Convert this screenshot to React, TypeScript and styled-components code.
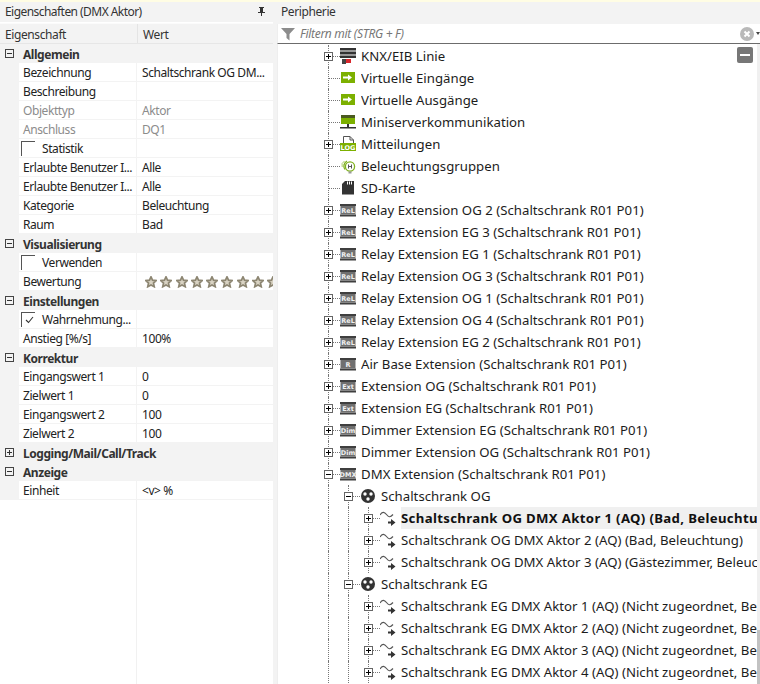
import React from "react";
import styled, { createGlobalStyle } from "styled-components";

const Global = createGlobalStyle`
  html, body { margin: 0; padding: 0; background: #f3f3f3; }
  body { width: 760px; height: 684px; overflow: hidden; font-family: "Noto Sans", "Open Sans", sans-serif; color: #1c1c1c; }
  #root { height: 684px; }
`;

const Page = styled.div`
  width: 760px; height: 684px; display: flex; flex-direction: column; overflow: hidden;
`;
const TopStrip = styled.div`height: 2px; background: #fffde4; flex: none;`;
const Panels = styled.div`flex: 1; display: flex; min-height: 0;`;

const LeftPanel = styled.section`
  width: 273px; margin-right: 4px; flex: none; display: flex; flex-direction: column; background: #fff;
`;
const TitleBar = styled.div`
  height: 20px; flex: none; display: flex; align-items: center; justify-content: space-between; box-sizing: border-box;
  padding: 0 8px 2px 5px; background: #f3f3f3; font-size: 12px; letter-spacing: -0.55px; color: #333;
`;
const RightTitle = styled(TitleBar)`padding-left: 4px; letter-spacing: -0.4px;`;
const PinIcon = styled.svg`width: 7px; height: 9px; display: block;`;
const HeaderRow = styled.div`
  height: 21px; flex: none; display: grid; grid-template-columns: 137px 1fr; background: #f3f3f3;
  border-top: 1px solid #fbfbfb; border-bottom: 1px solid #e6e6e6; box-sizing: border-box; margin-top: 1px;
`;
const HeaderCell = styled.div`
  display: flex; align-items: center; padding: 1px 0 0 5px; font-size: 12px; letter-spacing: -0.4px; color: #333;
  & + & { border-left: 1px solid #e4e4e4; }
`;
const Grid = styled.div`flex: 1; position: relative; display: flex; flex-direction: column;`;
const Category = styled.div`
  height: 19px; flex: none; background: #f3f3f3; display: flex; align-items: center; font-size: 12px; letter-spacing: -0.45px;
  font-weight: 700; color: #333;
`;
const CategoryName = styled.span`padding-top: 1px;`;
const CatBox = styled.span<{ $plus?: boolean }>`
  width: 7px; height: 7px; margin: 0 9px 0 5px; flex: none; border: 1px solid #444; position: relative; box-sizing: content-box;
  &::before { content: ""; position: absolute; left: 1px; right: 1px; top: 3px; height: 1px; background: #333; }
  &::after { content: ""; position: absolute; display: ${(p) => (p.$plus ? "block" : "none")};
    top: 1px; bottom: 1px; left: 3px; width: 1px; background: #333; }
`;
const PropRow = styled.div`
  height: 19px; flex: none; display: grid; grid-template-columns: 19px 117px 1fr; background: #fff; box-sizing: border-box;
  border-bottom: 1px solid #f3f3f3; font-size: 12px; letter-spacing: -0.42px;
`;
const Gutter = styled.div`background: #f3f3f3; margin-bottom: -1px;`;
const NameCell = styled.div<{ $muted?: boolean }>`
  display: flex; align-items: center; padding: 1px 0 0 4px; min-width: 0; white-space: nowrap; overflow: hidden;
  color: ${(p) => (p.$muted ? "#8c8c8c" : "#222")};
`;
const ValueCell = styled.div<{ $muted?: boolean }>`
  display: flex; align-items: center; padding: 1px 0 0 5px; border-left: 1px solid #f3f3f3; min-width: 0; white-space: nowrap; overflow: hidden;
  color: ${(p) => (p.$muted ? "#8c8c8c" : "#222")};
`;
const CheckFrame = styled.span`
  width: 13px; height: 14px; flex: none; margin: -1px 7px 0 -2px; border-left: 1px solid #555; border-top: 1px solid #555; position: relative;
`;
const CheckMark = styled.svg`position: absolute; left: 3px; top: 3px; width: 9px; height: 8px;`;
const Stars = styled.div`display: flex; gap: 3.3px; padding-left: 3px;`;
const EmptyFill = styled.div`flex: 1; display: grid; grid-template-columns: 136px 1px 1fr;`;
const EmptyLine = styled.div`background: #f1f1f1;`;

const RightPanel = styled.section`flex: 1; min-width: 0; display: flex; flex-direction: column; position: relative;`;
const FilterBar = styled.div`
  height: 19px; margin-top: 2px; flex: none; background: #fff; border-bottom: 1px solid #6c6c6c; display: flex; align-items: center; position: relative;
  padding-left: 3px; font-size: 12px; letter-spacing: -0.3px; font-style: italic; color: #777; gap: 5px; border-left: 1px solid #eee;
`;
const ClearBtn = styled.span`
  position: absolute; right: 6px; top: 3px; width: 14px; height: 14px; border-radius: 50%; background: #b9b9b9;
  display: flex; align-items: center; justify-content: center;
`;
const Caret = styled.span`
  position: absolute; right: 0; top: 8px; width: 0; height: 0; border-left: 2px solid transparent; border-right: 2px solid transparent; border-top: 3px solid #444;
`;
const TreeWrap = styled.div`flex: 1; min-height: 0; background: #fff; display: flex; position: relative; border-left: 1px solid #eee;`;
const Tree = styled.div`flex: 1; min-width: 0; overflow: hidden; padding: 1px 0 0 40px;`;
const ScrollTrack = styled.div`width: 3px; flex: none; background: #f0f0f0; display: flex; flex-direction: column; justify-content: flex-end;`;
const ScrollThumb = styled.div`height: 54px; background: #c2c2c2;`;
const CollapseBtn = styled.span`
  position: absolute; right: 7px; top: 3px; width: 16px; height: 16px; border-radius: 2px; background: #777;
  display: flex; align-items: center; justify-content: center;
  &::before { content: ""; width: 10px; height: 2px; background: #fff; }
`;
const Row = styled.div`height: 22px; display: flex; align-items: stretch; white-space: nowrap;`;
const Guide = styled.span<{ $on?: boolean }>`
  width: 20px; flex: none; position: relative;
  &::before { content: ""; display: ${(p) => (p.$on ? "block" : "none")}; position: absolute; left: 10px; top: 0; bottom: 0; border-left: 1px dotted #777; }
`;
const Joint = styled.span`
  width: 20px; flex: none; position: relative;
  &::before { content: ""; position: absolute; left: 10px; top: 0; bottom: 0; border-left: 1px dotted #777; }
  &::after { content: ""; position: absolute; left: 10px; right: -2px; top: 11px; border-top: 1px dotted #777; }
`;
const ExpBox = styled.span`
  position: absolute; z-index: 1; left: 6px; top: 7px; width: 7px; height: 7px; border: 1px solid #666; background: #fff; box-sizing: content-box;
`;
const ExpBar = styled.span`position: absolute; left: 1px; right: 1px; top: 3px; height: 1px; background: #000;`;
const ExpStem = styled.span`position: absolute; top: 1px; bottom: 1px; left: 3px; width: 1px; background: #000;`;
const IconSlot = styled.span`
  width: 16px; height: 16px; margin: 3px 5px 0 2px; flex: none; display: block;
  & > svg { display: block; width: 16px; height: 16px; }
`;
const Label = styled.span<{ $selected?: boolean }>`
  flex: 1; min-width: 0; overflow: hidden; display: flex; align-items: center; font-size: 13.2px;
  font-weight: ${(p) => (p.$selected ? 700 : 400)}; letter-spacing: ${(p) => (p.$selected ? "0.34px" : "0.02px")};
  background: ${(p) => (p.$selected ? "#f0f0f0" : "transparent")};
  color: ${(p) => (p.$selected ? "#111" : "#1c1c1c")};
`;
const LabelText = styled.span`flex: none;`;

const Star = () => (
  <svg width="12" height="12" viewBox="0 0 14 14">
    <path d="M7 1l1.8 3.9 4.2.5-3.1 2.9.9 4.2L7 10.4 3.2 12.5l.9-4.2L1 5.4l4.2-.5z" fill="#d9d3c3" stroke="#8d8672" strokeWidth="2" />
  </svg>
);

type IconKind = "knx" | "in" | "com" | "log" | "bulb" | "sd" | "ext" | "dmx" | "act";

const ChipText = styled.text`font-family: "DejaVu Sans", sans-serif; font-weight: 700;`;

const Icon = ({ kind, tag }: { kind: IconKind; tag?: string }) => {
  switch (kind) {
    case "knx":
      return (
        <svg viewBox="0 0 16 16">
          <rect x="0" y="0" width="16" height="2.5" fill="#333" />
          <rect x="0" y="3.5" width="16" height="3" fill="#333" />
          <rect x="0" y="7.5" width="16" height="2.5" fill="#333" />
          <rect x="2" y="11" width="4" height="5" fill="#444" />
          <rect x="6" y="11" width="5" height="4" fill="#d8262c" />
        </svg>
      );
    case "in":
      return (
        <svg viewBox="0 0 16 16">
          <rect x="1" y="2" width="14" height="11" fill="#7cb000" />
          <path d="M3 6.5h5V4.5l4 3-4 3V8.5H3z" fill="#fff" />
        </svg>
      );
    case "com":
      return (
        <svg viewBox="0 0 16 16">
          <rect x="1" y="1" width="14" height="3" fill="#4b5a20" />
          <rect x="1" y="4" width="14" height="6" fill="#7cb000" />
          <rect x="7" y="10" width="2" height="3" fill="#333" />
          <rect x="0" y="13" width="16" height="1.5" fill="#333" />
        </svg>
      );
    case "log":
      return (
        <svg viewBox="0 0 16 16">
          <path d="M3.5 7V.5h6.5l3.5 3.5v4" fill="none" stroke="#555" />
          <path d="M10 .5v3.5h3.5" fill="none" stroke="#555" />
          <rect x="0" y="7" width="16" height="8" fill="#7cb000" />
          <ChipText x="8" y="13.5" fontSize="6.5" fill="#fff" textAnchor="middle">LOG</ChipText>
        </svg>
      );
    case "bulb":
      return (
        <svg viewBox="0 0 16 16">
          <circle cx="10" cy="8.5" r="4.6" fill="none" stroke="#7fb11f" strokeWidth="1.3" />
          <path d="M4.8 11.5A6 6 0 0 1 7 3" fill="none" stroke="#7fb11f" strokeWidth="1.3" />
          <path d="M2.2 9A5 5 0 0 1 4.5 3" fill="none" stroke="#a8cc66" strokeWidth="1" />
          <path d="M8.5 6.5v4M11.5 6.5v4M8.5 8.5h3" stroke="#555" strokeWidth="1" />
          <rect x="8.5" y="13.5" width="3" height="2" fill="#999" />
        </svg>
      );
    case "sd":
      return (
        <svg viewBox="0 0 16 16">
          <path d="M5 1h9v13.5H2V4z" fill="#333" />
          <path d="M7.5 1.5v3M9.5 1.5v3M11.5 1.5v3" stroke="#fff" strokeWidth="1" />
        </svg>
      );
    case "ext":
      return (
        <svg viewBox="0 0 16 16">
          <rect x="0" y="2" width="16" height="2" fill="#3f3f3f" />
          <rect x="0" y="12.5" width="16" height="2" fill="#3f3f3f" />
          <rect x="0.5" y="4" width="15" height="8.5" fill="#707070" />
          <ChipText x="8" y="10.8" fontSize="6.5" fill="#f0f0f0" textAnchor="middle">{tag}</ChipText>
        </svg>
      );
    case "dmx":
      return (
        <svg viewBox="0 0 16 16">
          <circle cx="8" cy="8" r="7" fill="#333" />
          <circle cx="5" cy="6" r="1.7" fill="#fff" />
          <circle cx="11" cy="6" r="1.7" fill="#fff" />
          <circle cx="8" cy="11" r="1.7" fill="#fff" />
        </svg>
      );
    case "act":
      return (
        <svg viewBox="0 0 16 16">
          <path d="M0 5C2.5 1 4.5 2 6.5 4.5S10 8 13 4.5" fill="none" stroke="#555" strokeWidth="1.2" />
          <path d="M8 11.5h3V9l4.5 3.5L11 16v-2.5H8z" fill="#333" />
        </svg>
      );
  }
};

type Node = {
  label: string; icon: IconKind; tag?: string; level: number; exp?: "plus" | "minus"; selected?: boolean;
};

const ext = (label: string, tag: string): Node => ({ label, icon: "ext", tag, level: 0, exp: "plus" });
const nodes: Node[] = [
  { label: "KNX/EIB Linie", icon: "knx", level: 0, exp: "plus" },
  { label: "Virtuelle Eingänge", icon: "in", level: 0 },
  { label: "Virtuelle Ausgänge", icon: "in", level: 0 },
  { label: "Miniserverkommunikation", icon: "com", level: 0 },
  { label: "Mitteilungen", icon: "log", level: 0, exp: "plus" },
  { label: "Beleuchtungsgruppen", icon: "bulb", level: 0 },
  { label: "SD-Karte", icon: "sd", level: 0 },
  ext("Relay Extension OG 2 (Schaltschrank R01 P01)", "ReL"),
  ext("Relay Extension EG 3 (Schaltschrank R01 P01)", "ReL"),
  ext("Relay Extension EG 1 (Schaltschrank R01 P01)", "ReL"),
  ext("Relay Extension OG 3 (Schaltschrank R01 P01)", "ReL"),
  ext("Relay Extension OG 1 (Schaltschrank R01 P01)", "ReL"),
  ext("Relay Extension OG 4 (Schaltschrank R01 P01)", "ReL"),
  ext("Relay Extension EG 2 (Schaltschrank R01 P01)", "ReL"),
  ext("Air Base Extension (Schaltschrank R01 P01)", "R"),
  ext("Extension OG (Schaltschrank R01 P01)", "Ext"),
  ext("Extension EG (Schaltschrank R01 P01)", "Ext"),
  ext("Dimmer Extension EG (Schaltschrank R01 P01)", "Dim"),
  ext("Dimmer Extension OG (Schaltschrank R01 P01)", "Dim"),
  { label: "DMX Extension (Schaltschrank R01 P01)", icon: "ext", tag: "DMX", level: 0, exp: "minus" },
  { label: "Schaltschrank OG", icon: "dmx", level: 1, exp: "minus" },
  { label: "Schaltschrank OG DMX Aktor 1 (AQ) (Bad, Beleuchtung)", icon: "act", level: 2, exp: "plus", selected: true },
  { label: "Schaltschrank OG DMX Aktor 2 (AQ) (Bad, Beleuchtung)", icon: "act", level: 2, exp: "plus" },
  { label: "Schaltschrank OG DMX Aktor 3 (AQ) (Gästezimmer, Beleuchtung)", icon: "act", level: 2, exp: "plus" },
  { label: "Schaltschrank EG", icon: "dmx", level: 1, exp: "minus" },
  { label: "Schaltschrank EG DMX Aktor 1 (AQ) (Nicht zugeordnet, Beleuchtung)", icon: "act", level: 2, exp: "plus" },
  { label: "Schaltschrank EG DMX Aktor 2 (AQ) (Nicht zugeordnet, Beleuchtung)", icon: "act", level: 2, exp: "plus" },
  { label: "Schaltschrank EG DMX Aktor 3 (AQ) (Nicht zugeordnet, Beleuchtung)", icon: "act", level: 2, exp: "plus" },
  { label: "Schaltschrank EG DMX Aktor 4 (AQ) (Nicht zugeordnet, Beleuchtung)", icon: "act", level: 2, exp: "plus" },
];

type GridRow =
  | { t: "cat"; name: string; plus?: boolean }
  | { t: "row"; name: string; value?: string; muted?: boolean }
  | { t: "check"; name: string; checked?: boolean }
  | { t: "stars"; name: string };

const gridRows: GridRow[] = [
  { t: "cat", name: "Allgemein" },
  { t: "row", name: "Bezeichnung", value: "Schaltschrank OG DM..." },
  { t: "row", name: "Beschreibung" },
  { t: "row", name: "Objekttyp", value: "Aktor", muted: true },
  { t: "row", name: "Anschluss", value: "DQ1", muted: true },
  { t: "check", name: "Statistik" },
  { t: "row", name: "Erlaubte Benutzer I...", value: "Alle" },
  { t: "row", name: "Erlaubte Benutzer I...", value: "Alle" },
  { t: "row", name: "Kategorie", value: "Beleuchtung" },
  { t: "row", name: "Raum", value: "Bad" },
  { t: "cat", name: "Visualisierung" },
  { t: "check", name: "Verwenden" },
  { t: "stars", name: "Bewertung" },
  { t: "cat", name: "Einstellungen" },
  { t: "check", name: "Wahrnehmung...", checked: true },
  { t: "row", name: "Anstieg [%/s]", value: "100%" },
  { t: "cat", name: "Korrektur" },
  { t: "row", name: "Eingangswert 1", value: "0" },
  { t: "row", name: "Zielwert 1", value: "0" },
  { t: "row", name: "Eingangswert 2", value: "100" },
  { t: "row", name: "Zielwert 2", value: "100" },
  { t: "cat", name: "Logging/Mail/Call/Track", plus: true },
  { t: "cat", name: "Anzeige" },
  { t: "row", name: "Einheit", value: "<v> %" },
];

const TreeNode = ({ n }: { n: Node }) => (
  <Row>
    {n.level >= 1 && <Guide $on />}
    {n.level >= 2 && <Guide $on />}
    <Joint>
      {n.exp && (
        <ExpBox>
          <ExpBar />
          {n.exp === "plus" && <ExpStem />}
        </ExpBox>
      )}
    </Joint>
    <IconSlot><Icon kind={n.icon} tag={n.tag} /></IconSlot>
    <Label $selected={n.selected}><LabelText>{n.label}</LabelText></Label>
  </Row>
);

export default function App() {
  return (
    <Page>
      <Global />
      <TopStrip />
      <Panels>
        <LeftPanel>
          <TitleBar>
            <span>Eigenschaften (DMX Aktor)</span>
            <PinIcon viewBox="0 0 7 9">
              <path d="M1 0h5v1H5v4h2v1H4v3H3V6H0V5h2V1H1z" fill="#333" />
            </PinIcon>
          </TitleBar>
          <HeaderRow>
            <HeaderCell>Eigenschaft</HeaderCell>
            <HeaderCell>Wert</HeaderCell>
          </HeaderRow>
          <Grid>
            {gridRows.map((r, i) => {
              if (r.t === "cat")
                return (
                  <Category key={i}>
                    <CatBox $plus={r.plus} />
                    <CategoryName>{r.name}</CategoryName>
                  </Category>
                );
              return (
                <PropRow key={i}>
                  <Gutter />
                  <NameCell $muted={r.t === "row" && r.muted}>
                    {r.t === "check" && (
                      <CheckFrame>
                        {r.checked && (
                          <CheckMark viewBox="0 0 9 8">
                            <path d="M1 4l2.5 2.5L8 1" fill="none" stroke="#333" strokeWidth="1.1" />
                          </CheckMark>
                        )}
                      </CheckFrame>
                    )}
                    {r.name}
                  </NameCell>
                  <ValueCell $muted={r.t === "row" && r.muted}>
                    {r.t === "row" && r.value}
                    {r.t === "stars" && (
                      <Stars>
                        {Array.from({ length: 9 }).map((_, k) => <Star key={k} />)}
                      </Stars>
                    )}
                  </ValueCell>
                </PropRow>
              );
            })}
            <EmptyFill>
              <span />
              <EmptyLine />
              <span />
            </EmptyFill>
          </Grid>
        </LeftPanel>
        <RightPanel>
          <RightTitle>
            <span>Peripherie</span>
          </RightTitle>
          <FilterBar>
            <svg width="14" height="14" viewBox="0 0 14 14">
              <path d="M0 1h14L8.5 7v6.5L5.5 11V7z" fill="#8c8c8c" />
            </svg>
            <span>Filtern mit (STRG + F)</span>
            <ClearBtn>
              <svg width="8" height="8" viewBox="0 0 8 8">
                <path d="M1.5 1.5l5 5M6.5 1.5l-5 5" stroke="#fff" strokeWidth="2" />
              </svg>
            </ClearBtn>
            <Caret />
          </FilterBar>
          <TreeWrap>
            <Tree>
              {nodes.map((n, i) => <TreeNode key={i} n={n} />)}
            </Tree>
            <ScrollTrack><ScrollThumb /></ScrollTrack>
            <CollapseBtn />
          </TreeWrap>
        </RightPanel>
      </Panels>
    </Page>
  );
}
